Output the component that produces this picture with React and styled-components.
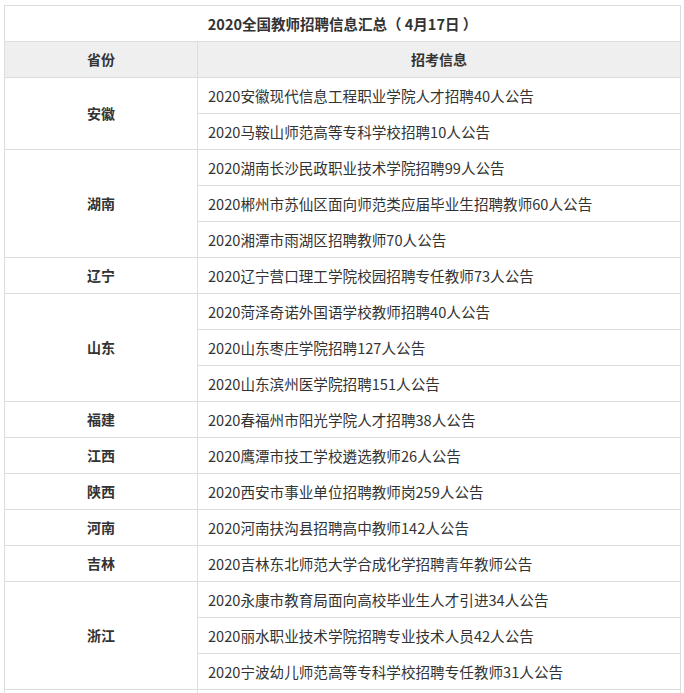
import React from "react";
import styled, { createGlobalStyle } from "styled-components";

const Global = createGlobalStyle`
  html, body { margin: 0; padding: 0; background: #fff; }
  body {
    font-family: "Noto Sans CJK SC", "Microsoft YaHei", sans-serif;
    color: #333;
  }
`;

const Page = styled.div`
  padding: 5px 0 0 4px;
`;

const Table = styled.table`
  width: 677px;
  border-collapse: collapse;
  table-layout: fixed;
  border: 1px solid #ddd;
`;

const Cell = styled.td`
  border: 1px solid #ddd;
  height: 35px;
  padding: 0 10px;
  box-sizing: border-box;
  line-height: 35px;
  white-space: nowrap;
  font-size: ${(p) => p.$size || 14.6}px;
  text-align: ${(p) => (p.$center ? "center" : "left")};
  font-weight: ${(p) => (p.$bold ? 700 : 400)};
  background: ${(p) => (p.$head ? "#efefef" : "#fff")};
`;

const data = [
  ["安徽", ["2020安徽现代信息工程职业学院人才招聘40人公告", "2020马鞍山师范高等专科学校招聘10人公告"]],
  ["湖南", ["2020湖南长沙民政职业技术学院招聘99人公告", "2020郴州市苏仙区面向师范类应届毕业生招聘教师60人公告", "2020湘潭市雨湖区招聘教师70人公告"]],
  ["辽宁", ["2020辽宁营口理工学院校园招聘专任教师73人公告"]],
  ["山东", ["2020菏泽奇诺外国语学校教师招聘40人公告", "2020山东枣庄学院招聘127人公告", "2020山东滨州医学院招聘151人公告"]],
  ["福建", ["2020春福州市阳光学院人才招聘38人公告"]],
  ["江西", ["2020鹰潭市技工学校遴选教师26人公告"]],
  ["陕西", ["2020西安市事业单位招聘教师岗259人公告"]],
  ["河南", ["2020河南扶沟县招聘高中教师142人公告"]],
  ["吉林", ["2020吉林东北师范大学合成化学招聘青年教师公告"]],
  ["浙江", ["2020永康市教育局面向高校毕业生人才引进34人公告", "2020丽水职业技术学院招聘专业技术人员42人公告", "2020宁波幼儿师范高等专科学校招聘专任教师31人公告"]],
  ["", [""]],
];

export default function App() {
  return (
    <Page>
      <Global />
      <Table>
        <colgroup>
          <col style={{ width: 193 }} />
          <col />
        </colgroup>
        <tbody>
          <tr>
            <Cell colSpan={2} $center $bold $size={14.5}>
              2020全国教师招聘信息汇总（ 4月17日 ）
            </Cell>
          </tr>
          <tr>
            <Cell $head $center $bold $size={14}>省份</Cell>
            <Cell $head $center $bold $size={14}>招考信息</Cell>
          </tr>
          {data.map(([prov, items]) =>
            items.map((t, i) => (
              <tr key={prov + i}>
                {i === 0 && (
                  <Cell rowSpan={items.length} $center $bold $size={14}>
                    {prov}
                  </Cell>
                )}
                <Cell>{t}</Cell>
              </tr>
            ))
          )}
        </tbody>
      </Table>
    </Page>
  );
}
